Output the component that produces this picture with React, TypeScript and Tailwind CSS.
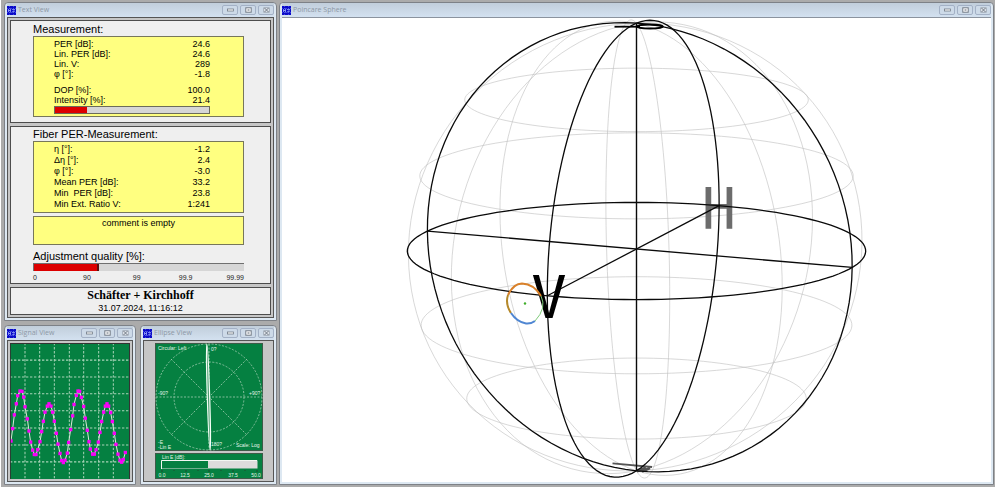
import type { ReactNode } from "react";

/* ---------- window chrome ---------- */

function AppIcon() {
  return (
    <svg viewBox="0 0 9 9" className="h-[9px] w-[9px] shrink-0" aria-hidden="true">
      <rect width="9" height="9" fill="#0a0ac8" />
      <path d="M0 2.5h9M0 6.5h9M2.5 0v9M6.5 0v9" stroke="#5a6cf0" strokeWidth="0.6" strokeDasharray="1 1" />
      <path d="M1.500 3v3M1.500 4.5h2M3.500 2.5v4M5 3.5h3M5 6l3-1" stroke="#a9baff" strokeWidth="0.7" fill="none" />
    </svg>
  );
}

function WindowButton({ label, children }: { label: string; children: ReactNode }) {
  return (
    <button
      type="button"
      aria-label={label}
      className="flex h-[10px] w-4 items-center justify-center rounded-[2px] border border-[#a3b1c6] bg-[#cddae8]"
    >
      <svg viewBox="0 0 7 6" className="h-[6px] w-[7px]" fill="none" aria-hidden="true">
        {children}
      </svg>
    </button>
  );
}

function Window({ title, className, children }: { title: string; className?: string; children: ReactNode }) {
  return (
    <section
      className={`flex min-w-0 flex-col rounded-t-[4px] border border-[#7d8187] bg-[#dde8f2] px-[2px] pb-[2px] ${className ?? ""}`}
    >
      <header className="flex h-[14px] shrink-0 items-center bg-linear-to-b from-[#c1cedb] to-[#d3e1f0]">
        <AppIcon />
        <h2 className="ml-[2px] flex-1 truncate font-['Open_Sans',sans-serif] text-[7px] leading-[12px] text-[#8d98a6]">
          {title}
        </h2>
        <div className="flex gap-[2px]">
          <WindowButton label="Minimize">
            <rect x="0.5" y="2" width="6" height="2" fill="#fff" stroke="#727b86" strokeWidth="0.8" />
          </WindowButton>
          <WindowButton label="Maximize">
            <rect x="0.8" y="0.8" width="5.4" height="4.4" fill="#fff" stroke="#727b86" />
            <rect x="2.5" y="2.4" width="2" height="1.2" fill="#727b86" />
          </WindowButton>
          <WindowButton label="Close">
            <rect x="0.8" y="0.8" width="5.4" height="4.4" fill="#e9eef4" stroke="#8b949f" strokeWidth="0.7" />
            <path d="M1.5 1l4 4M5.5 1l-4 4" stroke="#6d7681" strokeWidth="1" />
          </WindowButton>
        </div>
      </header>
      {children}
    </section>
  );
}

/* ---------- text view ---------- */

function Panel({ className, children }: { className?: string; children: ReactNode }) {
  return <div className={`border border-[#4c4c4c] bg-[#efefef] ${className ?? ""}`}>{children}</div>;
}

function Heading({ children }: { children: ReactNode }) {
  return <h3 className="text-[11px] leading-[14px]">{children}</h3>;
}

function Row({ label, value, className }: { label: string; value: string; className: string }) {
  return (
    <div className={`flex justify-between ${className}`}>
      <dt className="whitespace-pre">{label}</dt>
      <dd>{value}</dd>
    </div>
  );
}

const measurement = [
  ["PER [dB]:", "24.6"],
  ["Lin. PER [dB]:", "24.6"],
  ["Lin. V:", "289"],
  ["φ [°]:", "-1.8"],
];

const signalStrength = [
  ["DOP [%]:", "100.0"],
  ["Intensity [%]:", "21.4"],
];

const fiber = [
  ["η [°]:", "-1.2"],
  ["Δη [°]:", "2.4"],
  ["φ [°]:", "-3.0"],
  ["Mean PER [dB]:", "33.2"],
  ["Min  PER [dB]:", "23.8"],
  ["Min Ext. Ratio V:", "1:241"],
];

const YELLOW = "border border-[#77775a] bg-[#ffff80]";

function TextView() {
  return (
    <Window title="Text View">
      <div className="flex flex-col gap-[3px] border border-[#555] bg-[#c6c6c6] p-[2px] text-black">
        <Panel className="pb-[5px] pl-[22px] pr-[26px] pt-px">
          <Heading>Measurement:</Heading>
          <div className={`${YELLOW} pb-[2px] pl-5 pr-[33px] pt-[2px] text-[9px]`}>
            <dl>
              {measurement.map(([l, v]) => (
                <Row key={l} label={l} value={v} className="leading-[10px]" />
              ))}
            </dl>
            <dl className="mt-[6px]">
              {signalStrength.map(([l, v]) => (
                <Row key={l} label={l} value={v} className="leading-[10px]" />
              ))}
            </dl>
            <div className="mt-px h-2 border border-[#6b6b5a] bg-[#d6d6d6]">
              <div className="h-full w-[21%] bg-[#dc0000]" />
            </div>
          </div>
        </Panel>

        <Panel className="pl-[22px] pr-[26px]">
          <Heading>Fiber PER-Measurement:</Heading>
          <dl className={`${YELLOW} pb-[2px] pl-5 pr-[33px] pt-[2px] text-[9px]`}>
            {fiber.map(([l, v]) => (
              <Row key={l} label={l} value={v} className="leading-[11px]" />
            ))}
          </dl>
          <p className={`${YELLOW} mt-[3px] h-[29px] text-center text-[9px] leading-[12px]`}>comment is empty</p>
          <div className="mt-1">
            <Heading>Adjustment quality [%]:</Heading>
          </div>
          <div className="h-2 border-l border-t border-[#6f6f6f] bg-[#d6d6d6]">
            <div className="h-full w-[31%] border-r-2 border-[#5a1010] bg-[#dc0000]" />
          </div>
          <div className="mt-[2px] flex justify-between text-[7px] leading-[10px] text-[#222]">
            <span>0</span>
            <span className="pl-3">90</span>
            <span className="pl-2">99</span>
            <span className="pl-1">99.9</span>
            <span>99.99</span>
          </div>
        </Panel>

        <Panel className="pb-px text-center">
          <p className="font-['Liberation_Serif',serif] text-[12px] font-bold leading-[15px]">Schäfter + Kirchhoff</p>
          <p className="text-[9px] leading-[10px]">31.07.2024, 11:16:12</p>
        </Panel>
      </div>
    </Window>
  );
}

/* ---------- signal view ---------- */

const samples: [number, number][] = [
  [33, 361], [38, 324], [43, 283], [49, 250], [53, 226], [60, 212], [66, 213], [71, 230], [75, 259], [82, 295],
  [87, 331], [92, 364], [98, 388], [103, 401], [108, 401], [113, 387], [120, 363], [125, 333], [130, 302], [135, 275],
  [142, 257], [147, 250], [153, 257], [158, 275], [163, 302], [169, 338], [174, 370], [180, 398], [185, 419], [190, 425],
  [195, 418], [202, 397], [206, 365], [212, 327], [218, 286], [222, 252], [229, 225], [234, 212], [239, 213], [244, 231],
  [251, 258], [256, 293], [262, 329], [267, 363], [271, 385], [278, 400], [283, 400], [288, 387], [295, 364], [300, 335],
  [305, 303], [311, 275], [316, 257], [321, 250], [326, 257], [332, 276], [337, 303], [343, 338], [348, 371], [354, 400],
  [360, 418], [365, 424], [370, 416], [376, 395],
];

function SignalView() {
  return (
    <Window title="Signal View" className="w-[132px]">
      <div className="flex-1 border border-[#555] bg-[#c6c6c6] p-[2px]">
        <svg viewBox="30 69 360 405" preserveAspectRatio="none" className="h-[136px] w-full" aria-label="Signal">
          <rect x="30" y="69" width="360" height="405" fill="#058041" />
          <g stroke="#a9d3b8" strokeWidth="3" strokeDasharray="7 5">
            {[75, 119, 163, 208, 251, 296, 340].map((x) => (
              <line key={x} x1={x} x2={x} y1="69" y2="474" />
            ))}
            {[120, 170, 220, 271, 322, 373, 423].map((y) => (
              <line key={y} x1="30" x2="390" y1={y} y2={y} />
            ))}
          </g>
          <polyline points={samples.map((p) => p.join(",")).join(" ")} fill="none" stroke="#d5e8d5" strokeWidth="3" />
          {samples.map(([x, y]) => (
            <rect key={x} x={x - 5} y={y - 5} width="10" height="10" fill="#f800f8" />
          ))}
          <path d="M31 474V70.500H390" fill="none" stroke="#333" strokeWidth="3" />
          <path d="M388.500 70V474" fill="none" stroke="#333" strokeWidth="3" />
        </svg>
      </div>
    </Window>
  );
}

/* ---------- ellipse view ---------- */

function EllipseView() {
  return (
    <Window title="Ellipse View" className="w-[137px]">
      <div className="flex flex-1 flex-col items-center gap-[2px] border border-[#555] bg-[#c6c6c6] pt-[2px]">
        <svg viewBox="0 0 108 108" className="h-[108px] w-[108px]" fontFamily="Liberation Sans, sans-serif" fontSize="5" fill="#e4f5e8">
          <rect x="0.5" y="0.5" width="107" height="107" fill="#058041" stroke="#3d5a48" />
          <g fill="none" stroke="#9fcdb0" strokeWidth="0.8" strokeDasharray="2 1.500">
            <circle cx="54" cy="54" r="53" />
            <circle cx="54" cy="54" r="35" />
            <path d="M1 54H107M54 1V107M16 16L92 92M92 16L16 92" />
          </g>
          <ellipse cx="53.500" cy="54" rx="1.200" ry="53" transform="rotate(-1.800 53.500 54)" fill="#4e9c70" stroke="#f4fff6" strokeWidth="1.200" />
          <text x="3" y="7">Circular: Left</text>
          <text x="56" y="8">0?</text>
          <text x="3" y="52">-90?</text>
          <text x="94" y="52">+90?</text>
          <text x="56" y="103">180?</text>
          <text x="3" y="101">-E</text>
          <text x="3" y="106">-Lin E</text>
          <text x="81" y="104">Scale: Log</text>
        </svg>
        <svg viewBox="0 0 108 26" className="h-[26px] w-[108px]" fontFamily="Liberation Sans, sans-serif" fontSize="5" fill="#e4f5e8">
          <rect x="0.5" y="0.5" width="107" height="25" fill="#058041" stroke="#3d5a48" />
          <text x="7" y="6">Lin E [dB]:</text>
          <rect x="6.500" y="7.500" width="96" height="8" fill="#dcdcdc" />
          <rect x="7" y="8" width="46" height="7" fill="#058041" />
          <path d="M6.500 16V7.500H102" fill="none" stroke="#f2f7f2" />
          <path d="M7 17v2M19 17v1M31 17v2M43 17v1M54 17v2M66 17v1M78 17v2M90 17v1M102 17v2" stroke="#1e4a30" />
          <g textAnchor="middle">
            <text x="7" y="24">0.0</text>
            <text x="30" y="24">12.5</text>
            <text x="54" y="24">25.0</text>
            <text x="78" y="24">37.5</text>
            <text x="101" y="24">50.0</text>
          </g>
        </svg>
      </div>
    </Window>
  );
}

/* ---------- Poincare sphere ---------- */

const CENTER_X = 636.5;
const CENTER_Y = 249;
const RADIUS = 229;
const DISTANCE = 23.7;
const SIN_E = 0.2118;
const COS_E = 0.9773;
const rad = (deg: number) => (deg * Math.PI) / 180;

/* x points right, y points away from the viewer, z points up */
function project(x: number, y: number, z: number): [number, number] {
  const depth = -y * COS_E + z * SIN_E;
  const up = z * COS_E + y * SIN_E;
  const scale = (RADIUS * DISTANCE) / (DISTANCE - depth);
  return [CENTER_X + x * scale, CENTER_Y - up * scale];
}

function closed(at: (t: number) => [number, number]) {
  const points: string[] = [];
  for (let t = 0; t < 360; t += 3) {
    const [x, y] = at(rad(t));
    points.push(`${x.toFixed(2)},${y.toFixed(2)}`);
  }
  return points.join(" ");
}

function meridian(azimuth: number) {
  const a = rad(azimuth);
  return closed((t) => project(Math.cos(t) * Math.sin(a), Math.cos(t) * Math.cos(a), Math.sin(t)));
}

function parallel(z: number) {
  const r = Math.sqrt(1 - z * z);
  return closed((t) => project(r * Math.sin(t), r * Math.cos(t), z));
}

function axis(azimuth: number) {
  const a = rad(azimuth);
  const [x1, y1] = project(Math.sin(a), Math.cos(a), 0);
  const [x2, y2] = project(-Math.sin(a), -Math.cos(a), 0);
  return <line x1={x1} y1={y1} x2={x2} y2={y2} />;
}

function SphereView() {
  return (
    <Window title="Poincare Sphere" className="flex-1">
      <div className="flex flex-1 border-t border-[#8b939e] bg-white">
        <svg viewBox="282 18 709 464" className="h-[464px] w-full" aria-label="Poincare sphere">
          <g fill="none" stroke="#bdbdbd" strokeWidth="0.6">
            {[-8, -38, 52, 82].map((a) => (
              <polygon key={a} points={meridian(a)} />
            ))}
            {[2 / 3, 1 / 3, -1 / 3, -2 / 3].map((z) => (
              <polygon key={z} points={parallel(z)} />
            ))}
          </g>
          <g stroke="#555" fill="none">
            <path d="M612.500 463.300L652 467" strokeWidth="1.800" />
            <path d="M650 468L642 471.500M646 468L637 471" strokeWidth="3" />
          </g>
          <text x="719" y="229" textAnchor="middle" fontFamily="DejaVu Sans Mono, monospace" fontSize="57" fill="#6c6c6c">
            H
          </text>
          <g fill="none" stroke="#0a0a0a" strokeWidth="1.300">
            <polygon points={meridian(22)} />
            <polygon points={meridian(-68)} />
            <polygon points={parallel(0)} />
            {axis(22)}
            {axis(-68)}
            <line x1="636.500" y1="24" x2="636.500" y2="471" strokeWidth="1.400" />
          </g>
          <g fill="none" stroke="#000">
            <path d="M614.500 26.700H640" strokeWidth="1.800" />
            <ellipse cx="650" cy="26.500" rx="13" ry="2" strokeWidth="1.800" />
          </g>
          <text x="549" y="318" textAnchor="middle" fontFamily="DejaVu Sans Mono, monospace" fontSize="59" fill="#000">
            V
          </text>
          <g fill="none">
            <path d="M541 296Q547 308 535 321" stroke="#7fcb7a" strokeWidth="1" />
            <path d="M508 295Q513 284 522 283.500Q534 284 541 296" stroke="#d9812a" strokeWidth="2" />
            <path d="M508 295Q505 304 511 313" stroke="#b5892a" strokeWidth="2" />
            <path d="M511 313Q517 322 526 323.500Q531 324 535 321" stroke="#4f86d2" strokeWidth="2" />
          </g>
          <circle cx="525" cy="303.500" r="1.200" fill="#3fae2a" />
        </svg>
      </div>
    </Window>
  );
}

export default function App() {
  return (
    <main className="mx-px flex items-start gap-[2px] bg-[#ababab] pb-[2px] pl-[3px] pr-px pt-[2px] font-['Liberation_Sans',Arial,sans-serif]">
      <div className="flex w-[273px] shrink-0 flex-col gap-1">
        <TextView />
        <div className="flex justify-between">
          <SignalView />
          <EllipseView />
        </div>
      </div>
      <SphereView />
    </main>
  );
}
